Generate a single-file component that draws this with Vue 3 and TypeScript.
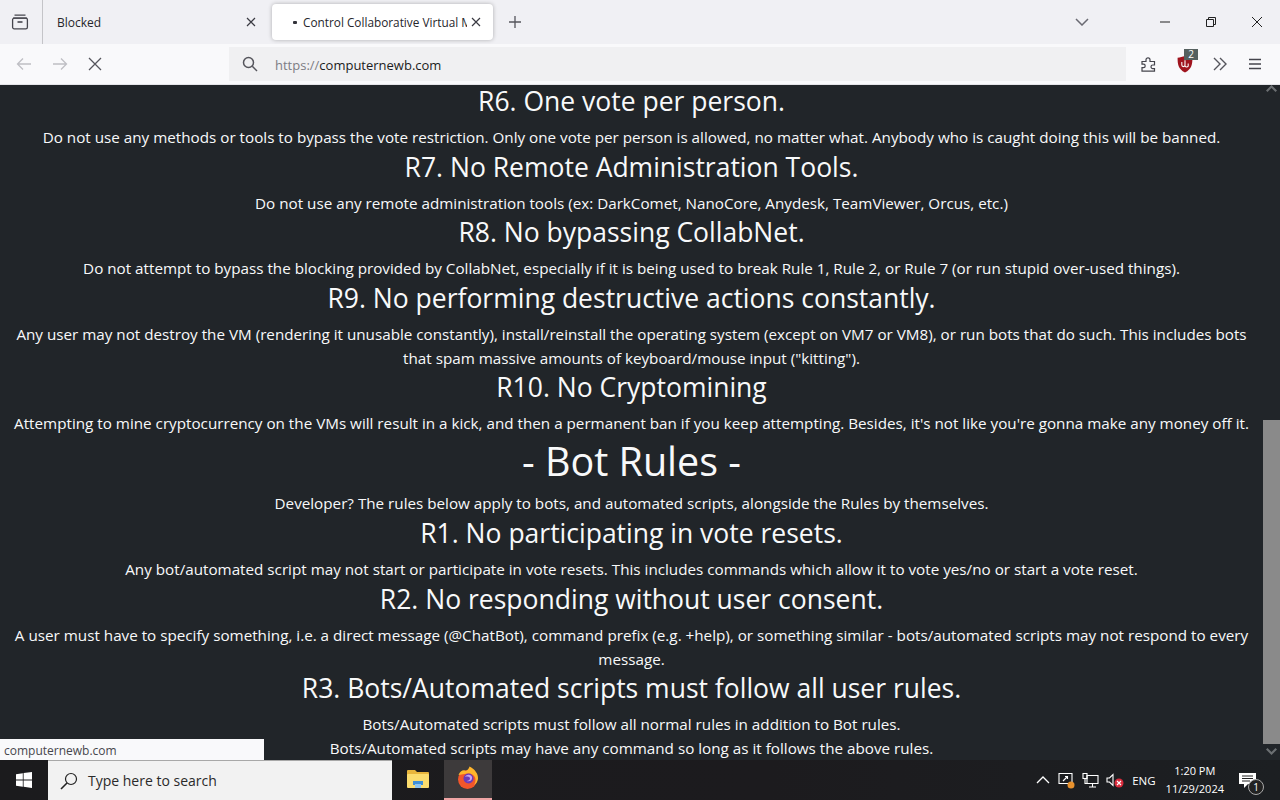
<script setup lang="ts">
interface Block {
  level: 'h1' | 'h3' | 'p'
  text: string
}

const blocks: Block[] = [
  { level: 'h3', text: 'R6. One vote per person.' },
  { level: 'p', text: 'Do not use any methods or tools to bypass the vote restriction. Only one vote per person is allowed, no matter what. Anybody who is caught doing this will be banned.' },
  { level: 'h3', text: 'R7. No Remote Administration Tools.' },
  { level: 'p', text: 'Do not use any remote administration tools (ex: DarkComet, NanoCore, Anydesk, TeamViewer, Orcus, etc.)' },
  { level: 'h3', text: 'R8. No bypassing CollabNet.' },
  { level: 'p', text: 'Do not attempt to bypass the blocking provided by CollabNet, especially if it is being used to break Rule 1, Rule 2, or Rule 7 (or run stupid over-used things).' },
  { level: 'h3', text: 'R9. No performing destructive actions constantly.' },
  { level: 'p', text: 'Any user may not destroy the VM (rendering it unusable constantly), install/reinstall the operating system (except on VM7 or VM8), or run bots that do such. This includes bots that spam massive amounts of keyboard/mouse input ("kitting").' },
  { level: 'h3', text: 'R10. No Cryptomining' },
  { level: 'p', text: "Attempting to mine cryptocurrency on the VMs will result in a kick, and then a permanent ban if you keep attempting. Besides, it's not like you're gonna make any money off it." },
  { level: 'h1', text: '- Bot Rules -' },
  { level: 'p', text: 'Developer? The rules below apply to bots, and automated scripts, alongside the Rules by themselves.' },
  { level: 'h3', text: 'R1. No participating in vote resets.' },
  { level: 'p', text: 'Any bot/automated script may not start or participate in vote resets. This includes commands which allow it to vote yes/no or start a vote reset.' },
  { level: 'h3', text: 'R2. No responding without user consent.' },
  { level: 'p', text: 'A user must have to specify something, i.e. a direct message (@ChatBot), command prefix (e.g. +help), or something similar - bots/automated scripts may not respond to every message.' },
  { level: 'h3', text: 'R3. Bots/Automated scripts must follow all user rules.' },
  { level: 'p', text: 'Bots/Automated scripts must follow all normal rules in addition to Bot rules.' },
  { level: 'p', text: 'Bots/Automated scripts may have any command so long as it follows the above rules.' },
]
</script>

<template>
  <div class="screen">
    <div class="tabbar">
      <div class="tab-view">
        <svg width="18" height="16" viewBox="0 0 18 16" fill="none" stroke="#45454d" stroke-width="1.3">
          <path d="M3.5 1.2h11M2 4.2h14" />
          <rect x="1.6" y="4.2" width="14.8" height="10.6" rx="1.6" />
          <path d="M6.5 8h5" stroke-width="1.6" />
        </svg>
      </div>
      <div class="tab">
        <span class="tab-title">Blocked</span>
        <svg class="tab-close" width="10" height="10" viewBox="0 0 10 10"><path d="M1 1l8 8M9 1l-8 8" /></svg>
      </div>
      <div class="tab tab-active">
        <span class="tab-dot"></span>
        <span class="tab-title">Control Collaborative Virtual M</span>
        <svg class="tab-close" width="10" height="10" viewBox="0 0 10 10"><path d="M1 1l8 8M9 1l-8 8" /></svg>
      </div>
      <svg class="new-tab" width="14" height="14" viewBox="0 0 14 14"><path d="M7 1v12M1 7h12" /></svg>
      <div class="spacer"></div>
      <svg class="all-tabs" width="14" height="8" viewBox="0 0 14 8"><path d="M1 1l6 6 6-6" /></svg>
      <div class="win-controls">
        <svg width="10" height="10" viewBox="0 0 10 10"><path d="M0 5h10" /></svg>
        <svg width="10" height="10" viewBox="0 0 10 10"><path d="M.5 2.500h7v7h-7zM2.500 2.500v-2h7v7h-2" /></svg>
        <svg width="10" height="10" viewBox="0 0 10 10"><path d="M0 0l10 10M10 0L0 10" /></svg>
      </div>
    </div>

    <div class="toolbar">
      <div class="nav-buttons">
        <svg class="dim" width="16" height="14" viewBox="0 0 16 14"><path d="M15 7H2M7 1.500L1.500 7 7 12.500" /></svg>
        <svg class="dim" width="16" height="14" viewBox="0 0 16 14"><path d="M1 7h13M9 1.500L14.500 7 9 12.500" /></svg>
        <svg class="stop" width="14" height="14" viewBox="0 0 14 14"><path d="M1 1l12 12M13 1L1 13" /></svg>
      </div>
      <div class="urlbar">
        <svg width="16" height="16" viewBox="0 0 16 16" fill="none" stroke="#55555c" stroke-width="1.500">
          <circle cx="6.500" cy="6.500" r="5" />
          <path d="M10.300 10.300L15 15" />
        </svg>
        <span class="url"><span class="url-scheme">https://</span>computernewb.com</span>
      </div>
      <div class="tool-icons">
        <svg width="16" height="16" viewBox="0 0 16 16" fill="none" stroke="#45454d" stroke-width="1.200">
          <path d="M1 5.500h4V3.800a2 2 0 0 1 4 0v1.700h4.500V9h-1.700a1.800 1.800 0 0 0 0 3.600h1.700v2.500H1v-3.500h1.500a1.700 1.700 0 0 0 0-3.400H1z" />
        </svg>
        <div class="ublock">
          <svg width="16" height="18" viewBox="0 0 15 17">
            <path d="M.5 2.500C3 2.500 5 1.800 7.500 1c2.500.8 4.500 1.500 7 1.500 0 6-.5 10.500-7 14-6.500-3.500-7-8-7-14z" fill="#a0141e" />
            <path d="M4.500 6.500v3a1.500 1.500 0 0 0 3 0v-3M7.500 5v5.500a1.800 1.800 0 0 0 3 0V8" fill="none" stroke="#fff" stroke-width="1" />
          </svg>
          <span class="ublock-badge">2</span>
        </div>
        <svg width="14" height="14" viewBox="0 0 14 14" fill="none" stroke="#55555c" stroke-width="1.400">
          <path d="M1 1l6 6-6 6M7 1l6 6-6 6" />
        </svg>
        <svg class="menu" width="14" height="12" viewBox="0 0 14 12" fill="none" stroke="#45454d" stroke-width="1.400">
          <path d="M1 1.500h12M1 6h12M1 10.500h12" />
        </svg>
      </div>
    </div>

    <div class="viewport">
      <main class="page">
        <template v-for="(block, i) in blocks" :key="i">
          <h1 v-if="block.level === 'h1'">{{ block.text }}</h1>
          <h3 v-else-if="block.level === 'h3'">{{ block.text }}</h3>
          <p v-else>{{ block.text }}</p>
        </template>
      </main>
      <div class="scrollbar">
        <svg class="arrow" width="11" height="7" viewBox="0 0 11 7"><path d="M0 5.500L5.500 0 11 5.500 9.500 7 5.500 3 1.500 7z" /></svg>
        <div class="track"><div class="thumb"></div></div>
        <svg class="arrow" width="11" height="7" viewBox="0 0 11 7"><path d="M0 1.500L5.500 7 11 1.500 9.500 0 5.500 4 1.500 0z" /></svg>
      </div>
      <div class="status">computernewb.com</div>
    </div>

    <footer class="taskbar">
      <div class="start">
        <svg width="16" height="16" viewBox="0 0 16 16" fill="#fff">
          <path d="M0 2.200l6.800-1v6.400H0zM7.600 1.100L16 0v7.600H7.600zM0 8.400h6.800v6.400l-6.800-1zM7.600 8.400H16V16l-8.400-1.200z" />
        </svg>
      </div>
      <div class="search">
        <svg width="18" height="18" viewBox="0 0 18 18" fill="none" stroke="#222" stroke-width="1.200">
          <circle cx="11" cy="7" r="5.500" />
          <path d="M7 11L1 17" stroke-width="1.600" />
        </svg>
        <span>Type here to search</span>
      </div>
      <div class="task-app">
        <svg width="22" height="20" viewBox="0 0 22 20">
          <path d="M0 2a1 1 0 0 1 1-1h7l2 2h11a1 1 0 0 1 1 1v2H0z" fill="#e8b53c" />
          <rect y="5" width="22" height="14" rx="1" fill="#fbdc6e" />
          <path d="M6 12h10v4H6z" fill="#3f8fd6" />
          <path d="M8 15h6v4H8z" fill="#8dc4ef" />
        </svg>
      </div>
      <div class="task-app task-active">
        <svg width="24" height="24" viewBox="0 0 24 24">
          <circle cx="11.500" cy="13.500" r="9.500" fill="#f2562b" />
          <path d="M2.500 9C4 4.500 8 3 10 5c2-1 3-3 3.500-4.500 5 2.500 9 7 8.500 12.500-.5 3-2 5-4 6 2-3 2-7 0-9-1-1.500-3-2.500-5-2.500-3 0-6 1-10.500 1.500z" fill="#ffb52c" />
          <circle cx="12.500" cy="12.500" r="5" fill="#6c3bb8" />
          <path d="M9 11c1-2 4-3 6-1.500 1.500 1 1.500 3.500 0 5-1 .8-3 1-4.500.5 2 0 3.500-1 3.500-2.500S12 10 9 11z" fill="#c6a4ef" />
        </svg>
      </div>
      <div class="spacer"></div>
      <div class="tray">
        <svg width="14" height="8" viewBox="0 0 14 8" fill="none" stroke="#fff" stroke-width="1.300"><path d="M1 7l6-6 6 6" /></svg>
        <svg width="18" height="17" viewBox="0 0 18 17" fill="none" stroke="#fff" stroke-width="1.100">
          <path d="M2 1.500h13v10H2z" />
          <path d="M6 9l4-4M8 4.500h2.500V7" />
          <circle cx="14" cy="13" r="3.500" fill="#e8912d" stroke="none" />
        </svg>
        <svg width="17" height="15" viewBox="0 0 17 15" fill="none" stroke="#fff" stroke-width="1.100">
          <path d="M5 2.500h11v8H5zM10.500 10.500v3M7 14h7" />
          <path d="M1 .5h4v5H1zM3 5.500v5H5" />
        </svg>
        <svg width="18" height="15" viewBox="0 0 18 15" fill="none">
          <path d="M1 5h2.500L7 1.500v11L3.500 9H1z" stroke="#fff" stroke-width="1.100" />
          <circle cx="13" cy="10" r="4.500" fill="#d92b3c" />
          <path d="M11 8l4 4M15 8l-4 4" stroke="#fff" stroke-width="1.100" />
        </svg>
        <span class="lang">ENG</span>
        <div class="clock">
          <span>1:20 PM</span>
          <span>11/29/2024</span>
        </div>
        <div class="notify">
          <svg width="17" height="15" viewBox="0 0 17 15">
            <path d="M0 0h17v11h-8l-4 4v-4H0z" fill="#fff" />
            <path d="M3 3h11M3 5.500h11M3 8h8" stroke="#222" stroke-width="1" />
          </svg>
          <span class="notify-count">1</span>
        </div>
      </div>
    </footer>
  </div>
</template>

<style scoped>
.screen {
  width: 1280px;
  height: 800px;
  display: flex;
  flex-direction: column;
  overflow: hidden;
  font-family: "Open Sans", "Noto Sans", sans-serif;
}

.spacer {
  flex: 1;
}

.tabbar {
  height: 44px;
  flex: none;
  display: flex;
  align-items: center;
  background: #f0f0f4;
}

.tab-view {
  width: 43px;
  height: 44px;
  flex: none;
  display: flex;
  align-items: center;
  justify-content: center;
  padding-right: 3px;
  box-sizing: border-box;
  border-right: 1px solid #c4c4c8;
}

.tab {
  width: 229px;
  height: 36px;
  flex: none;
  display: flex;
  align-items: center;
  box-sizing: border-box;
  padding: 0 16px 0 14px;
  font-size: 12px;
  color: #26262b;
}

.tab-title {
  flex: 1;
  white-space: nowrap;
  overflow: hidden;
}

.tab-close {
  flex: none;
  fill: none;
  stroke: #3a3a42;
  stroke-width: 1.200;
}

.tab-active {
  width: 221px;
  padding: 0 12px 0 21px;
  background: #fff;
  border-radius: 4px;
  box-shadow: 0 0 4px rgba(0, 0, 0, 0.28);
}

.tab-active .tab-title {
  margin-right: 4px;
  font-size: 11.800px;
}

.tab-dot {
  width: 4px;
  height: 3px;
  margin-right: 6px;
  flex: none;
  border-radius: 1px;
  background: #33333a;
}

.new-tab {
  margin-left: 15px;
  fill: none;
  stroke: #55555c;
  stroke-width: 1.300;
}

.all-tabs {
  margin-right: 71px;
  fill: none;
  stroke: #6a6a72;
  stroke-width: 1.500;
}

.win-controls {
  display: flex;
  gap: 36px;
  margin-right: 18px;
}

.win-controls svg {
  fill: none;
  stroke: #222;
  stroke-width: 1;
}

.toolbar {
  height: 40px;
  flex: none;
  display: flex;
  align-items: center;
  background: #f9f9fb;
  border-bottom: 1px solid #e4e4e8;
}

.nav-buttons {
  width: 229px;
  flex: none;
  display: flex;
  align-items: center;
  gap: 20px;
  padding-left: 16px;
  box-sizing: border-box;
}

.nav-buttons svg {
  fill: none;
  stroke-width: 1.300;
}

.dim {
  stroke: #bfbfc4;
}

.stop {
  stroke: #55555c;
  stroke-width: 1.500;
}

.urlbar {
  width: 897px;
  height: 34px;
  flex: none;
  display: flex;
  align-items: center;
  gap: 17px;
  padding-left: 13px;
  box-sizing: border-box;
  background: #f0f0f2;
  font-size: 13px;
  color: #1c1c22;
}

.url {
  padding-top: 2px;
}

.url-scheme {
  color: #7d7d84;
}

.tool-icons {
  flex: 1;
  display: flex;
  align-items: center;
  gap: 20px;
  padding-left: 15px;
}

.menu {
  margin-left: 1px;
}

.ublock {
  position: relative;
  display: flex;
}

.ublock-badge {
  position: absolute;
  top: -6px;
  right: -5px;
  width: 14px;
  height: 11px;
  background: #55605f;
  color: #fff;
  font-size: 10px;
  line-height: 11px;
  text-align: center;
}

.viewport {
  position: relative;
  height: 675px;
  flex: none;
  display: flex;
  overflow: hidden;
  background: #212529;
}

.page {
  flex: 1;
  min-width: 0;
  padding: 0 12px;
  color: #f8f9fa;
  text-align: center;
  font-size: 15.230px;
  line-height: 24px;
}

h1,
h3 {
  margin: 0 0 6.500px;
  font-weight: 400;
}

h1 {
  font-size: 39.500px;
  line-height: 48px;
}

h3 {
  font-size: 26.500px;
  line-height: 33.600px;
}

p {
  margin: 0;
}

p + h1,
p + h3 {
  margin-top: 1.500px;
}

.scrollbar {
  width: 17px;
  flex: none;
  display: flex;
  flex-direction: column;
  align-items: center;
  background: #212529;
}

.arrow {
  flex: none;
  margin: 0 0 5px;
  fill: #6b6f72;
}

.arrow:first-child {
  margin: 0;
}

.track {
  flex: 1;
  width: 100%;
  display: flex;
  align-items: flex-end;
  padding-bottom: 4px;
}

.thumb {
  width: 100%;
  height: 324px;
  background: #8a8a8a;
}

.status {
  position: absolute;
  left: 0;
  bottom: 0;
  width: 264px;
  height: 21px;
  padding-left: 4px;
  box-sizing: border-box;
  background: #f9f9fb;
  color: #47474d;
  font-size: 12px;
  line-height: 23px;
}

.taskbar {
  height: 40px;
  flex: none;
  display: flex;
  align-items: stretch;
  background: linear-gradient(90deg, #1b1b1d, #1c1b1e 60%, #1c1f22);
}

.start {
  width: 48px;
  flex: none;
  display: flex;
  align-items: center;
  justify-content: center;
}

.search {
  width: 344px;
  flex: none;
  display: flex;
  align-items: center;
  gap: 10px;
  padding-left: 12px;
  box-sizing: border-box;
  background: #f2f2f2;
  border-top: 1px solid #a8a8a8;
  color: #2a2a2a;
  font-size: 14px;
}

.task-app {
  width: 48px;
  margin-left: 2px;
  flex: none;
  display: flex;
  align-items: center;
  justify-content: center;
  padding-bottom: 2px;
  box-sizing: border-box;
}

.task-active {
  background: #3d3a3b;
  border-bottom: 2px solid #f0a5a5;
}

.tray {
  display: flex;
  align-items: center;
  gap: 7px;
  padding-right: 24px;
  color: #fff;
}

.lang {
  margin-left: 1px;
  font-size: 11.500px;
}

.clock {
  display: flex;
  flex-direction: column;
  align-items: center;
  margin-left: 3px;
  font-size: 11px;
  line-height: 18px;
}

.notify {
  position: relative;
  display: flex;
  margin-left: 8px;
}

.notify-count {
  position: absolute;
  right: -8px;
  bottom: -7px;
  width: 14px;
  height: 14px;
  border: 1px solid #aaa;
  border-radius: 50%;
  background: #222;
  font-size: 10px;
  line-height: 14px;
  text-align: center;
}
</style>

<style>
html,
body {
  margin: 0;
  background: #212529;
}
</style>
